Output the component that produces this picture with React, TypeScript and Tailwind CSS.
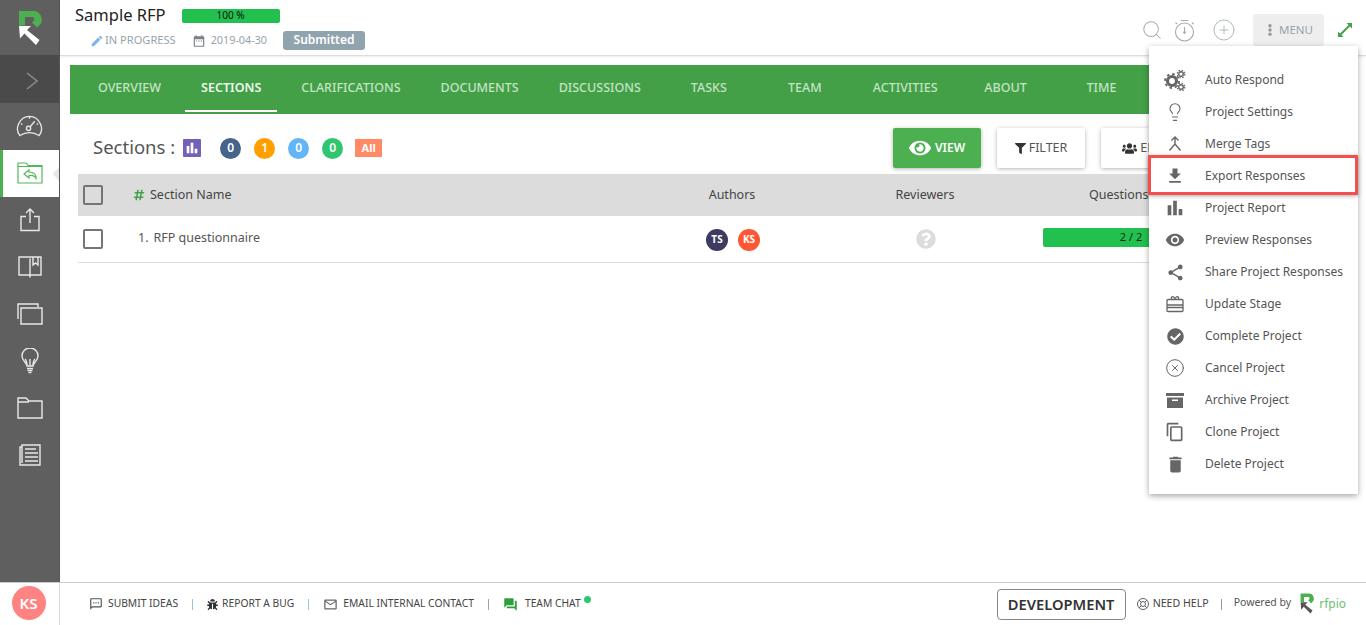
import React from "react";
import { FaEye, FaFilter, FaUsers, FaHashtag, FaQuestionCircle, FaCheckCircle, FaBug } from "react-icons/fa";
import { MdFileDownload, MdEdit, MdDateRange, MdContentCopy, MdShare, MdForum, MdOutlineMailOutline, MdRemoveRedEye, MdBarChart, MdOutlineSms, MdDelete } from "react-icons/md";
import { LuSearch, LuCirclePlus, LuLightbulb, LuCircleX } from "react-icons/lu";

const font = { fontFamily: '"Noto Sans", sans-serif' };

function Logo({ w, h, arrow = "#ffffff", green = "#4caf50" }: { w: number; h: number; arrow?: string; green?: string }) {
  return (
    <svg width={w} height={h} viewBox="18 9 24 36">
      <path d="M19 10h14a8.500 8.500 0 0 1 5 15.500l-1 1-5-5 1.500-1.500a2.300 2.300 0 0 0-1-4H25v8.500h-6z" fill={green} />
      <path d="M19 25h12l-4 4 12.500 10-3.500 5-11.500-11.500-4.500 5z" fill={arrow} />
    </svg>
  );
}

const sw = { fill: "none", stroke: "#e8e8e8", strokeWidth: 1.4 };

const SideIcons = {
  gauge: (
    <svg width="27" height="22" viewBox="0 0 28 23" {...sw}>
      <path d="M4 21.500C1 18 1 13 2.500 9.500 5 4 9.500 1.500 14 1.500s9 2.500 11.500 8c1.500 3.500 1.500 8.500-1.500 12-3-2-6.500-3-10-3s-7 1-10 3z" />
      <circle cx="13" cy="14" r="2.200" />
      <path d="M14.500 12.500l5-6M5 9l1.500 1M23 9l-1.500 1M14 2v2" />
    </svg>
  ),
  folder: (
    <svg width="26" height="22" viewBox="0 0 26 22" fill="none" stroke="#4fb95a" strokeWidth="1.200">
      <path d="M1 21V1h8l2 2.500h14V21zM1 4.500h24" />
      <path d="M12 8l-5 4 5 4v-2.500c3-.5 6 .5 7 3 .5-3.500-2-6.500-7-6.500z" />
    </svg>
  ),
  upload: (
    <svg width="20" height="24" viewBox="0 0 20 24" {...sw}>
      <path d="M6 8.500H1v14h18v-14h-5M10 15V1.500M6 5l4-4 4 4" />
    </svg>
  ),
  book: (
    <svg width="24" height="22" viewBox="0 0 24 22" {...sw}>
      <path d="M12 2.500V21M1 1h22v18H12.500l-.5 1.500-.5-1.500H1zM15 1v8l2.500-2 2.500 2V1" />
    </svg>
  ),
  copies: (
    <svg width="26" height="22" viewBox="0 0 26 22" {...sw}>
      <path d="M1 16V1h20v3M4 5h21v16H4z" />
    </svg>
  ),
  bulb: (
    <svg width="18" height="26" viewBox="0 0 18 26" {...sw}>
      <path d="M6 18c0-3-5-5-5-10a8 8 0 0 1 16 0c0 5-5 7-5 10zM6 18c0-3-1-6-2-7M12 18c0-3 1-6 2-7M9 18v-7M6 20.500h6M6.500 22.500h5M7.500 24.500h3" />
    </svg>
  ),
  folder2: (
    <svg width="26" height="22" viewBox="0 0 26 22" {...sw}>
      <path d="M1 21V1h8l3 3h13v17zM1 5h11" />
    </svg>
  ),
  notes: (
    <svg width="22" height="22" viewBox="0 0 22 22" {...sw}>
      <path d="M3 3H1v18h20V1H3v18M6 5h11M6 9h13M6 13h13M6 17h13" />
    </svg>
  ),
};

const SideItem = ({ children, active }: { children: React.ReactNode; active?: boolean }) => (
  <div className={active ? "relative h-[47px] flex items-center justify-center bg-white border-l-[3px] border-[#4caf50] pr-[3px] pb-[2px]" : "h-[47px] flex items-center justify-center pb-[2px]"}>
    {children}
    {active && <div className="absolute right-0 top-[17px] w-0 h-0 border-y-[7px] border-y-transparent border-r-[6px] border-r-[#e3e8ea]" />}
  </div>
);

const tabs = ["OVERVIEW", "SECTIONS", "CLARIFICATIONS", "DOCUMENTS", "DISCUSSIONS", "TASKS", "TEAM", "ACTIVITIES", "ABOUT", "TIME"];

const GearsIcon = () => (
  <svg width="22" height="22" viewBox="0 0 22 22" fill="#666">
    <circle cx="8" cy="12" r="4.500" fill="none" stroke="#666" strokeWidth="3.200" />
    <circle cx="8" cy="12" r="7" fill="none" stroke="#666" strokeWidth="1.800" strokeDasharray="2.500 3" />
    <circle cx="17" cy="5" r="2.300" fill="none" stroke="#666" strokeWidth="1.400" />
    <circle cx="17" cy="5" r="3.800" fill="none" stroke="#666" strokeWidth="1.200" strokeDasharray="1.500 1.500" />
    <circle cx="17" cy="18" r="2.300" fill="none" stroke="#666" strokeWidth="1.400" />
    <circle cx="17" cy="18" r="3.800" fill="none" stroke="#666" strokeWidth="1.200" strokeDasharray="1.500 1.500" />
  </svg>
);
const MergeIcon = () => (
  <svg width="16" height="16" viewBox="0 0 16 16" fill="none" stroke="#666" strokeWidth="1.400">
    <path d="M4.500 4.500L8 1l3.500 3.500M8 1v7l-5.500 6.500M8 8l5.500 6.500" />
  </svg>
);
const StageIcon = () => (
  <svg width="18" height="18" viewBox="0 0 18 18" fill="none" stroke="#666" strokeWidth="1.300">
    <rect x="1" y="4.500" width="16" height="12" rx="1" />
    <path d="M1 10h16M1 12.500h16M6 4.500c-2-3 1-4 3-1 2-3 5-2 3 1" />
  </svg>
);
const ArchiveIcon = () => (
  <svg width="18" height="15" viewBox="0 0 18 15" fill="#666">
    <path d="M0 0h18v3H0zM1 4.500h16V15H1zM6 6.500v1.500h6V6.500z" fillRule="evenodd" />
  </svg>
);

const menu: [string, React.ReactNode][] = [
  ["Auto Respond", <GearsIcon />],
  ["Project Settings", <LuLightbulb size={20} color="#666" strokeWidth={1.300} />],
  ["Merge Tags", <MergeIcon />],
  ["Export Responses", <MdFileDownload size={20} color="#666" />],
  ["Project Report", <MdBarChart size={22} color="#666" />],
  ["Preview Responses", <MdRemoveRedEye size={20} color="#666" />],
  ["Share Project Responses", <MdShare size={19} color="#666" />],
  ["Update Stage", <StageIcon />],
  ["Complete Project", <FaCheckCircle size={17} color="#666" />],
  ["Cancel Project", <LuCircleX size={20} color="#666" strokeWidth={1.200} />],
  ["Archive Project", <ArchiveIcon />],
  ["Clone Project", <MdContentCopy size={20} color="#666" />],
  ["Delete Project", <MdDelete size={21} color="#666" />],
];

const Avatar = ({ t, c }: { t: string; c: string }) => (
  <div className={`w-[22px] h-[22px] rounded-full flex items-center justify-center text-white text-[10px] font-bold ${c}`}>{t}</div>
);

const Check = () => <div className="w-5 h-5 border-2 border-[#757575] rounded-[2px]" />;

const Pill = ({ t, c }: { t: string; c: string }) => (
  <div className={`w-[21px] h-[21px] rounded-full flex items-center justify-center text-white text-[12px] font-semibold ${c}`}>{t}</div>
);

const FootLink = ({ icon, t, gap }: { icon: React.ReactNode; t: string; gap: string }) => (
  <div className={`flex items-center text-[10.300px] text-[#444] ${gap}`}>{icon}<span>{t}</span></div>
);
const Sep = ({ c }: { c: string }) => <div className={`w-px h-[11px] mx-[14px] ${c}`} />;

export default function App() {
  return (
    <div style={font} className="relative w-[1366px] h-[625px] overflow-hidden bg-white flex flex-col text-[#444]">
      <div className="flex-1 flex min-h-0">
        <aside className="w-[60px] shrink-0 bg-[#5f5f5f] border-r border-[#555] flex flex-col">
          <div className="h-[55px] pt-[10px] pl-[18px]"><Logo w={24} h={36} /></div>
          <div className="h-[48px] bg-[#4a4a4a] flex items-center justify-center pl-[5px] pt-[4px]">
            <svg width="13" height="18" viewBox="0 0 13 18" fill="none" stroke="#8c8c8c" strokeWidth="1.600"><path d="M1 1l10 8-10 8" /></svg>
          </div>
          <SideItem>{SideIcons.gauge}</SideItem>
          <SideItem active>{SideIcons.folder}</SideItem>
          <SideItem>{SideIcons.upload}</SideItem>
          <SideItem>{SideIcons.book}</SideItem>
          <SideItem>{SideIcons.copies}</SideItem>
          <SideItem>{SideIcons.bulb}</SideItem>
          <SideItem>{SideIcons.folder2}</SideItem>
          <SideItem>{SideIcons.notes}</SideItem>
        </aside>
        <main className="flex-1 min-w-0 flex flex-col">
          <header className="h-[56px] shrink-0 border-b border-[#ddd] shadow-[0_1px_2px_rgba(0,0,0,0.08)] flex justify-between pl-[15px] pr-[14px]">
            <div>
              <div className="flex items-center h-[31px]">
                <span className="text-[16.500px] text-[#222] leading-none">Sample RFP</span>
                <div className="ml-[16px] w-[98px] h-[14px] rounded-[2px] bg-[#22c04f] flex items-center justify-center text-[10px] text-[#111]">100 %</div>
              </div>
              <div className="flex items-center h-[19px] text-[11.100px] text-[#97a3aa]">
                <MdEdit size={14} color="#7fb3ea" className="ml-[15px] mr-[1px]" />
                <span>IN PROGRESS</span>
                <MdDateRange size={14} color="#78838a" className="ml-[16px] mr-[5px]" />
                <span className="text-[10.800px]">2019-04-30</span>
                <div className="ml-[16px] w-[82px] h-[19px] pb-[1px] rounded-[3px] bg-[#90a4ae] text-white text-[12px] font-semibold flex items-center justify-center">Submitted</div>
              </div>
            </div>
            <div className="flex items-center h-[60px] -mb-[4px]">
              <LuSearch size={22} color="#a6b0b6" strokeWidth={1.100} />
              <svg width="21" height="23" viewBox="0 0 21 23" fill="none" stroke="#a0aab0" strokeWidth="1.100" className="ml-[11px]">
                <circle cx="10.500" cy="13" r="9" />
                <path d="M10.500 8v5M7 1.500h7M3 5L1.500 3.500M18 5l1.500-1.500" />
                <circle cx="10.500" cy="13.500" r=".8" fill="#a0aab0" />
              </svg>
              <LuCirclePlus size={24} color="#a6b0b6" strokeWidth={0.900} className="ml-[17px]" />
              <div className="ml-[17px] w-[71px] h-[32px] pl-[4px] rounded-[3px] bg-[#eeeeee] flex items-center justify-center gap-[7px] text-[11.500px] text-[#97a3aa]">
                <svg width="4" height="12" viewBox="0 0 4 12" fill="#8f9aa1"><circle cx="2" cy="1.700" r="1.700" /><circle cx="2" cy="6" r="1.700" /><circle cx="2" cy="10.300" r="1.700" /></svg>
                MENU
              </div>
              <svg width="14" height="14" viewBox="0 0 14 14" fill="#43a047" stroke="#43a047" className="ml-[14px]">
                <path d="M2.500 11.500l9-9" strokeWidth="2" />
                <path d="M8.500 0H14v5.500zM0 14V8.500L5.500 14z" stroke="none" />
              </svg>
            </div>
          </header>
          <div className="pt-[9px] pl-[10px] pr-[8px]">
            <nav className="h-[49px] bg-[#43a047] flex pl-[8px] text-[12.500px] font-medium">
              {tabs.map((t) => (
                <div
                  key={t}
                  className={
                    t === "SECTIONS"
                      ? "mx-[4px] mb-[2px] min-w-[88px] px-[16px] pt-[2px] flex items-center justify-center text-[#eef7ee] font-semibold border-b-2 border-white"
                      : "mx-[4px] mb-[2px] min-w-[88px] px-[16px] pt-[2px] flex items-center justify-center text-[#c3e3c5] border-b-2 border-transparent"
                  }
                >
                  {t}
                </div>
              ))}
            </nav>
            <div className="h-[60px] flex items-center pl-[23px] pt-[8px]">
              <span className="text-[18.500px] text-[#555] -mt-[2px]">Sections :</span>
              <div className="ml-[8px] w-[18px] h-[18px] rounded-[1px] bg-[#7460b8] flex items-center justify-center"><MdBarChart size={16} color="#fff" /></div>
              <div className="ml-[19px] flex items-center gap-[13px]">
                <Pill t="0" c="bg-[#46648a]" />
                <Pill t="1" c="bg-[#ffa000]" />
                <Pill t="0" c="bg-[#64b5f6]" />
                <Pill t="0" c="bg-[#2fc66f]" />
                <div className="-ml-[1px] w-[27px] h-[18px] bg-[#ff8a65] text-white text-[11px] font-bold flex items-center justify-center">All</div>
              </div>
              <div className="ml-auto flex gap-[16px] mr-[169px]">
                <div className="w-[88px] h-[40px] rounded-[2px] bg-[#4caf50] text-white text-[12px] font-semibold shadow-[0_1px_4px_rgba(0,0,0,0.3)] flex items-center justify-center gap-[4px]"><FaEye size={22} />VIEW</div>
                <div className="w-[88px] h-[40px] rounded-[2px] bg-white text-[#555] text-[12.500px] shadow-[0_1px_4px_rgba(0,0,0,0.3)] flex items-center justify-center gap-[3px]"><FaFilter size={11} color="#333" />FILTER</div>
                <div className="w-[88px] h-[40px] rounded-[2px] bg-white text-[#555] text-[12.500px] shadow-[0_1px_4px_rgba(0,0,0,0.3)] flex items-center justify-center gap-[3px]"><FaUsers size={15} color="#333" />EDIT</div>
              </div>
            </div>
            <div className="ml-[8px] h-[42px] bg-[#dcdcdc] grid grid-cols-[55px_503px_192px_194px_218px_1fr] items-center text-[12.500px] text-[#444]">
              <div className="pl-[5px]"><Check /></div>
              <div className="flex items-center gap-[5px]"><FaHashtag size={12} color="#43a047" />Section Name</div>
              <div className="text-center">Authors</div>
              <div className="text-center">Reviewers</div>
              <div className="pl-[67px]">Questions</div>
              <div />
            </div>
            <div className="ml-[8px] h-[47px] border-b border-[#ddd] grid grid-cols-[55px_503px_192px_194px_218px_1fr] items-center text-[12.500px] text-[#555]">
              <div className="pl-[5px]"><Check /></div>
              <div className="pl-[5px] pb-[1px] flex gap-[5px]"><span>1.</span><span>RFP questionnaire</span></div>
              <div className="flex justify-center gap-[10px] pt-[1px] pl-[2px]">
                <Avatar t="TS" c="bg-[#3f3a60]" />
                <Avatar t="KS" c="bg-[#ff5733]" />
              </div>
              <div className="flex justify-center pl-[2px]"><FaQuestionCircle size={20} color="#dcdcdc" /></div>
              <div className="flex justify-center pb-[3px]">
                <div className="w-[176px] h-[19px] rounded-[2px] bg-[#22c04f] flex items-center justify-center text-[11px] text-[#222]">2 / 2</div>
              </div>
              <div />
            </div>
          </div>
        </main>
      </div>
      <footer className="h-[43px] shrink-0 border-t border-[#ccc] flex items-center">
        <div className="w-[60px] h-full border-r border-[#ddd] flex items-center justify-center">
          <div className="mr-[2px] mb-[2px] w-[34px] h-[34px] rounded-full bg-[#ff8383] text-white font-semibold text-[15px] flex items-center justify-center">KS</div>
        </div>
        <div className="flex items-center pl-[29px]">
          <FootLink gap="gap-[5px]" icon={<MdOutlineSms size={14} color="#555" />} t="SUBMIT IDEAS" />
          <Sep c="bg-[#9cc3d9]" />
          <FootLink gap="gap-[4px]" icon={<FaBug size={11} color="#333" />} t="REPORT A BUG" />
          <Sep c="bg-[#9cc3d9]" />
          <FootLink gap="gap-[5px]" icon={<MdOutlineMailOutline size={15} color="#666" />} t="EMAIL INTERNAL CONTACT" />
          <Sep c="bg-[#b09ab0]" />
          <FootLink gap="gap-[7px]" icon={<MdForum size={15} color="#2e9e3f" />} t="TEAM CHAT" />
          <div className="w-[7px] h-[7px] rounded-full bg-[#2fc66f] ml-[3px] mb-[9px]" />
        </div>
        <div className="ml-auto flex items-center pr-[20px]">
          <div className="w-[129px] h-[31px] border border-[#888] rounded-[4px] flex items-center justify-center text-[14.700px] font-semibold text-[#333]">DEVELOPMENT</div>
          <svg width="12" height="12" viewBox="0 0 12 12" fill="none" stroke="#666" className="ml-[11px] mr-[4px]"><circle cx="6" cy="6" r="5.500" /><circle cx="6" cy="6" r="2.500" /><path d="M2 2l2.200 2.200M10 2L7.800 4.200M2 10l2.200-2.200M10 10L7.800 7.800" /></svg>
          <span className="text-[10.600px] text-[#444]">NEED HELP</span>
          <div className="w-px h-[11px] bg-[#999] ml-[12px] mr-[12px]" />
          <span className="text-[10.500px] text-[#555] mb-[2px]">Powered by</span>
          <div className="ml-[9px] mb-[1px]"><Logo w={14} h={21} arrow="#555" green="#4caf50" /></div>
          <span className="ml-[5px] mb-[1px] text-[12px] text-[#6cbf70]">rfpio</span>
        </div>
      </footer>

      <div className="absolute left-[1149px] top-[46px] w-[209px] h-[448px] bg-white shadow-[0_2px_6px_rgba(0,0,0,0.35)] pt-[18px] text-[12px] text-[#555]">
        {menu.map(([t, icon]) => (
          <div key={t} className="relative h-[32px] flex items-center">
            <div className="w-[52px] flex justify-center">{icon}</div>
            <span className="ml-[4px]">{t}</span>
            {t === "Export Responses" && (
              <div className="absolute -left-[1px] right-0 -top-[5px] h-[40px] border-[3px] border-[#f44f4f] shadow-[0_1px_4px_rgba(0,0,0,0.35)]" />
            )}
          </div>
        ))}
      </div>
    </div>
  );
}
